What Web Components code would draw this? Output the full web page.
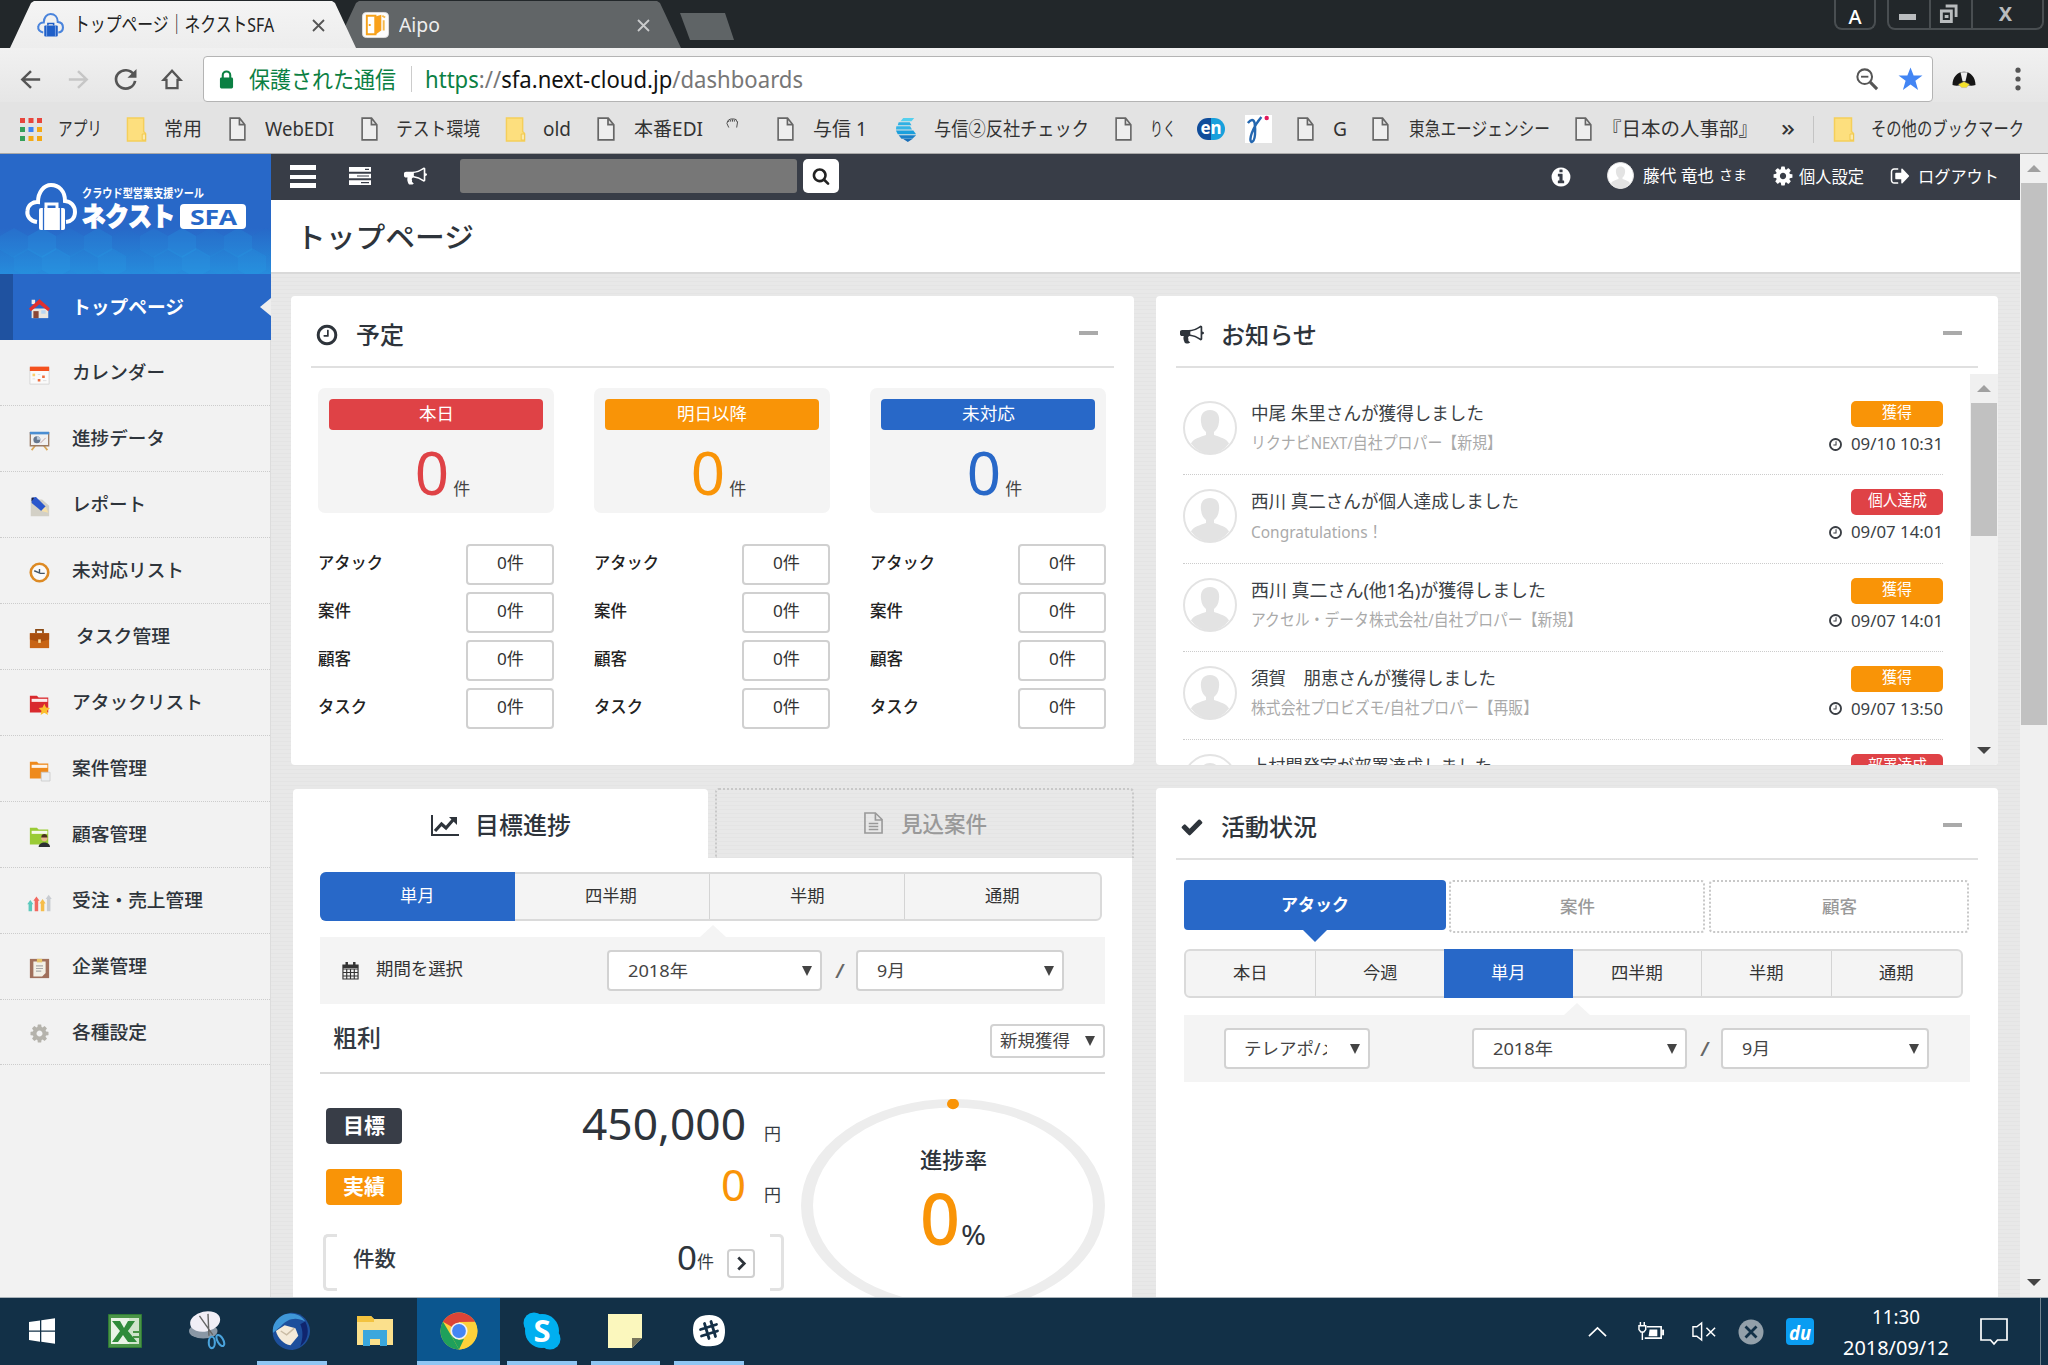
<!DOCTYPE html>
<html lang="ja">
<head>
<meta charset="utf-8">
<title>トップページ｜ネクストSFA</title>
<style>
html,body{margin:0;padding:0;width:2048px;height:1365px;overflow:hidden;background:#fff}
body{font-family:"Noto Sans","Noto Sans CJK JP",sans-serif;color:#333a42}
</style>
</head>
<body>
<sfa-desktop></sfa-desktop>
<script>
const FA={
clock:'M1024 544v448q0 14-9 23t-23 9h-320q-14 0-23-9t-9-23v-64q0-14 9-23t23-9h224v-352q0-14 9-23t23-9h64q14 0 23 9t9 23zm416 352q0-148-73-273t-198-198-273-73-273 73-198 198-73 273 73 273 198 198 273 73 273-73 198-198 73-273zm224 0q0 209-103 385.5t-279.5 279.5-385.5 103-385.5-103-279.5-279.5-103-385.5 103-385.5 279.5-279.5 385.5-103 385.5 103 279.5 279.5 103 385.5z',
cog:'M1152 896q0-106-75-181t-181-75-181 75-75 181 75 181 181 75 181-75 75-181zm512-109v222q0 12-8 23t-20 13l-185 28q-19 54-39 91 35 50 107 138 10 12 10 25t-9 23q-27 37-99 108t-94 71q-12 0-26-9l-138-108q-44 23-91 38-16 136-29 186-7 28-36 28h-222q-14 0-24.5-8.5t-11.5-21.5l-28-184q-49-16-90-37l-141 107q-10 9-25 9-14 0-25-11-126-114-165-168-7-10-7-23 0-12 8-23 15-21 51-66.5t54-70.5q-27-50-41-99l-183-27q-13-2-21-12.5t-8-23.5v-222q0-12 8-23t19-13l186-28q14-46 39-92-40-57-107-138-10-12-10-24 0-10 9-23 26-36 98.5-107.5t94.5-71.5q13 0 26 10l138 107q44-23 91-38 16-136 29-186 7-28 36-28h222q14 0 24.500 8.500t11.500 21.500l28 184q49 16 90 37l142-107q9-9 24-9 13 0 25 10 129 119 165 170 7 8 7 22 0 12-8 23-15 21-51 66.5t-54 70.5q26 50 41 98l183 28q13 2 21 12.5t8 23.5z',
bullhorn:'M1664 640q53 0 90.5 37.5t37.5 90.5-37.5 90.5-90.5 37.5v384q0 52-38 90t-90 38q-417-347-812-380-58 19-91 66t-31 100.5 40 92.5q-20 33-23 65.5t6 58 33.5 55 48 50 61.5 50.5q-29 58-111.5 83t-168.5 11.5-132-55.5q-7-23-29.5-87.5t-32-94.5-23-89-15-101 3.5-98.5 22-110.5h-122q-66 0-113-47t-47-113v-192q0-66 47-113t113-47h480q435 0 896-384 52 0 90 38t38 90v384zm-128 604v-954q-394 302-768 343v270q377 42 768 341z',
info:'M1152 1376v-160q0-14-9-23t-23-9h-96v-512q0-14-9-23t-23-9h-320q-14 0-23 9t-9 23v160q0 14 9 23t23 9h96v320h-96q-14 0-23 9t-9 23v160q0 14 9 23t23 9h448q14 0 23-9t9-23zm-128-896v-160q0-14-9-23t-23-9h-192q-14 0-23 9t-9 23v160q0 14 9 23t23 9h192q14 0 23-9t9-23zm640 416q0 209-103 385.5t-279.5 279.5-385.5 103-385.5-103-279.5-279.5-103-385.5 103-385.5 279.5-279.5 385.5-103 385.5 103 279.5 279.5 103 385.5z',
signout:'M704 1440q0 4 1 20t.5 26.5-3 23.5-10 19.5-20.5 6.5h-320q-119 0-203.5-84.5t-84.5-203.5v-704q0-119 84.5-203.5t203.5-84.5h320q13 0 22.5 9.5t9.5 22.5q0 4 1 20t.5 26.5-3 23.5-10 19.5-20.5 6.5h-320q-66 0-113 47t-47 113v704q0 66 47 113t113 47h312l11.5 1 11.5 3 8 5.5 7 9 2 13.5zm928-544q0 26-19 45l-544 544q-19 19-45 19t-45-19-19-45v-288h-448q-26 0-45-19t-19-45v-384q0-26 19-45t45-19h448v-288q0-26 19-45t45-19 45 19l544 544q19 19 19 45z',
check:'M1671 566q0 40-28 68l-724 724-136 136q-28 28-68 28t-68-28l-136-136-362-362q-28-28-28-68t28-68l136-136q28-28 68-28t68 28l294 295 656-657q28-28 68-28t68 28l136 136q28 28 28 68z',
search:'M1216 832q0-185-131.5-316.5t-316.5-131.5-316.5 131.5-131.5 316.5 131.5 316.5 316.5 131.5 316.5-131.5 131.5-316.5zm512 832q0 52-38 90t-90 38q-54 0-90-38l-343-342q-179 124-399 124-143 0-273.5-55.5t-225-150-150-225-55.5-273.5 55.5-273.5 150-225 225-150 273.5-55.5 273.5 55.5 225 150 150 225 55.5 273.5q0 220-124 399l343 343q37 37 37 90z'
};
const fa=n=>['0 0 1792 1792',`<path fill="currentColor" d="${FA[n]}"/>`];
const folder=(c,x)=>['0 0 24 24',`<path d="M1 2h8l2 2h11v17H1z" fill="${c}"/><path d="M3 5.500h18v3.500H3z" fill="#fff" opacity=".9"/>${x}`];
const cloud=(bag,line,stripe)=>['0 0 52 48',`<path d="M12 39C5 38 1.500 33 2.500 27.500 3 22 8 18.500 13 19 13 9 19 2 26 2c8 0 14 6 14 16 6 .5 10 5 10 11 0 6-4 9.500-9 10" fill="none" stroke="${line}" stroke-width="4"/><rect x="14" y="25" width="26" height="22" rx="2" fill="${bag}"/><path d="M21 25v-4h11v4" fill="none" stroke="${bag}" stroke-width="3"/><path d="M18.500 25v22M35.500 25v22" stroke="${stripe}" stroke-width="1.300"/>`];
const ICONS={
clock:fa('clock'),cog:fa('cog'),bullhorn:fa('bullhorn'),info:fa('info'),signout:fa('signout'),check:fa('check'),search:fa('search'),
logo:cloud('#fff','#fff','#2868c8'),favicon:cloud('#1f5fc8','#4a84dc','#9fc0f2'),
aipo:['0 0 28 28','<rect x=".5" y=".5" width="27" height="27" rx="4" fill="#fdfdfd" stroke="#ddd"/><path d="M5 4h9v20H5z" fill="#fff" stroke="#f5a21c" stroke-width="2"/><path d="M13 5l7-2v17l-7 5z" fill="#f9a11b"/><path d="M7 14h2" stroke="#f5a21c" stroke-width="2"/><path d="M21 4l3 2M22.500 20V9" stroke="#f5b94c" stroke-width="2"/>'],
back:['0 0 24 24','<path d="M22 12H3M12 2.500L2.500 12l9.500 9.500" fill="none" stroke="currentColor" stroke-width="2.700"/>'],
fwd:['0 0 24 24','<path d="M2 12h19M12 2.500l9.500 9.500-9.500 9.500" fill="none" stroke="currentColor" stroke-width="2.700"/>'],
reload:['0 0 24 24','<path d="M20.500 7A10 10 0 1 0 22 14" fill="none" stroke="currentColor" stroke-width="2.800"/><path d="M23.500 1v9.500H14z" fill="currentColor"/>'],
home:['0 0 24 24','<path d="M12 3L2.800 13H6v9h12v-9h3.200z" fill="none" stroke="currentColor" stroke-width="2.500"/>'],
lock:['0 0 16 20','<rect x="1" y="8" width="14" height="11.500" rx="1.500" fill="#0b8043"/><path d="M4 9V5.500a4 4 0 0 1 8 0V9" fill="none" stroke="#0b8043" stroke-width="2.200"/>'],
zoomout:['0 0 24 24','<circle cx="9.500" cy="9.500" r="8" fill="none" stroke="currentColor" stroke-width="2.200"/><path d="M5.500 9.500h8" stroke="currentColor" stroke-width="2"/><path d="M15.500 15.500L23 23" stroke="currentColor" stroke-width="3.400"/>'],
star:['0 0 24 24','<path d="M12 .5l3 8h8.500l-6.800 5.300 2.600 9.200L12 17.600 4.700 23l2.600-9.200L.5 8.500H9z" fill="#4285f4"/>'],
penguin:['0 0 24 20','<path d="M12 1C5 1 .5 8 .5 16.500c4 1.500 8 .5 11.500-1 3.500 1.500 7.500 2.500 11.500 1C23.500 8 19 1 12 1z" fill="#161616"/><path d="M8.500 1.500h7L13.500 12h-3z" fill="#eee"/><path d="M6.500 15.500l5.500-3 5.500 3-3 4H9.500z" fill="#f3e02a" stroke="#a98" stroke-width=".4"/>'],
dots:['0 0 6 24','<g fill="#555"><circle cx="3" cy="3.200" r="2.600"/><circle cx="3" cy="12" r="2.600"/><circle cx="3" cy="20.800" r="2.600"/></g>'],
apps:['0 0 22 23','<g><path fill="#e8453c" d="M0 0h5v5H0zM8.500 0h5v5h-5zM17 0h5v5h-5z"/><path fill="#34a05a" d="M0 9h5v5H0zM0 18h5v5H0z"/><path fill="#3f84f3" d="M8.500 9h5v5h-5z"/><path fill="#f4a915" d="M17 9h5v5h-5zM8.500 18h5v5h-5zM17 18h5v5h-5z"/></g>'],
bfold:['0 0 22 25','<path d="M1.500 1h17v13.500l2 2V24h-19z" fill="#fddf7e" stroke="#f5cf5a" stroke-width="1.500"/><path d="M17 17h3.500v6H17z" fill="#fbe9ac" stroke="#f0c84e"/>'],
doc:['0 0 18 25','<path d="M1.200 1.200h10L16.800 8v15.800H1.200zM11 1.200V8h5.800" fill="#eee" stroke="#666" stroke-width="1.700"/>'],
hand:['0 0 14 11','<path d="M3 10.500L1 6l1-3 1 1V2l2-.8L7 1l2 .2 2 .6.3 1.800L12.500 4l-1 6.500M5 4V2M7 4V1.500M9 4V2" fill="none" stroke="#444" stroke-width="1"/>'],
globe:['0 0 24 26','<path d="M9 1h12l-3 3.500H6z" fill="#55d0ee"/><path d="M4 5.500h12l2 3H3z" fill="#2fb0e4"/><path d="M1.500 9.500h15l2 3.500H1z" fill="#35b4e6"/><path d="M1 14h19l3 4H3z" fill="#1b9fdc"/><path d="M4 19h19l-4 3.500H7z" fill="#1a80c8"/><path d="M9 23h10l-5 3z" fill="#1a6fb8"/>'],
gamma:['0 0 28 28','<path d="M0 0h28v28H0z" fill="#fff"/><path d="M3 8c3-4 6-4 7 0 1 7 1 18-3 19-4-1 1-15 10-25" fill="none" stroke="#2467b0" stroke-width="2.500"/><circle cx="22.500" cy="3" r="2.300" fill="#e2185b"/>'],
tasks:['0 0 22 19','<path fill="currentColor" d="M0 0h22v5H0zM0 7h22v5H0zM0 14h22v5H0z"/><path d="M16 2.500h4M8 9.500h12M12 16.500h8" stroke="#383d47" stroke-width="1.300"/>'],
chart:['0 0 28 21','<path d="M1 0v20h27" fill="none" stroke="currentColor" stroke-width="2"/><path d="M4 16l6.500-7 4.500 4 7-8" fill="none" stroke="currentColor" stroke-width="3.200"/><path d="M18 2h8v8z" fill="currentColor"/>'],
filetext:['0 0 20 22','<path d="M1 1h11l7 6.500V21H1zM12 1v7h7M5 11.500h10M5 14.500h10M5 17.500h10" fill="none" stroke="currentColor" stroke-width="1.700"/>'],
calendar:['0 0 18 19','<path d="M1 4h16v14H1zM1 8h16M1 11.500h16M1 15h16M5 8v10M9 8v10M13 8v10" fill="none" stroke="currentColor" stroke-width="1.200"/><path d="M1 4h16v3H1z" fill="currentColor"/><path d="M5 1v4M13 1v4" stroke="currentColor" stroke-width="2.600"/>'],
right:['0 0 12 16','<path d="M2.500 1.500L9 8l-6.500 6.500" fill="none" stroke="#2e343b" stroke-width="3"/>'],
m0:['0 0 24 24','<path d="M3 2h4v5H3z" fill="#eee"/><path d="M3 12h19v11H3z" fill="#e9e6e0"/><path d="M0 12L12 1l12 11-2 3-10-8-10 8z" fill="#e02f2f"/><path d="M5 15h6v8H5z" fill="#8a4636"/><path d="M14 14h5v4h-5z" fill="#b9d6f2"/>'],
m1:['0 0 24 24','<path d="M1 4h22v19H1z" fill="#fafafa" stroke="#d5d5d5"/><path d="M1 3h22v5H1z" fill="#f4511e"/><path d="M4 11h3v3H4z" fill="#f9cf6a"/><path d="M15 13h3v3h-3zM10 17h3v3h-3z" fill="#ef6a3a"/><path d="M4 17h3M10 12h3M16 19h4" stroke="#ddd"/>'],
m2:['0 0 24 24','<path d="M7 18l-4 5M17 18l4 5" stroke="#d9a85a" stroke-width="2"/><path d="M1.500 3h21v15h-21z" fill="#f1f1f1" stroke="#9a7a62" stroke-width="1.500"/><path d="M1 2h22v3H1z" fill="#4b8ed2"/><circle cx="9" cy="11" r="4" fill="#66788f"/><path d="M13 15l6-6" stroke="#b99"/><path d="M9 11V7a4 4 0 0 1 4 4z" fill="#b8c8dc"/>'],
m3:['0 0 24 24','<path d="M2 4h13l8 7v12H2z" fill="#d3d0c6"/><path d="M3 2l5-1 11 11-5 5L3 8z" fill="#2b57cc"/><path d="M19 12l3 7-8-2z" fill="#f5dfaa"/><path d="M3 2l3 0-3 4z" fill="#223"/>'],
m4:['0 0 24 24','<circle cx="12" cy="12" r="10" fill="#fafafa" stroke="#dd8a24" stroke-width="3"/><path d="M6 10l7 3h5M12 8v5" fill="none" stroke="#456" stroke-width="1.600"/>'],
m5:['0 0 24 24','<path d="M8 6V2h8v4" fill="none" stroke="#8a4a16" stroke-width="2"/><path d="M1 6h22v17H1z" fill="#c86414"/><path d="M1 6h22v7l-11 3-11-3z" fill="#a94f10"/><path d="M10.500 13h3v4h-3z" fill="#ffe2a0"/>'],
m6:folder('#d92a2e','<path d="M17.500 11l2 4.500 4.500.5-3.300 3 1 5-4.200-2.500-4.200 2.500 1-5-3.300-3 4.500-.5z" fill="#fbc02d"/>'),
m7:folder('#ee8a1c','<path d="M14 14h10v10H14z" fill="#eceff1" stroke="#ccc"/>'),
m8:folder('#9acb36','<circle cx="17.500" cy="14" r="3.500" fill="#e9b78f"/><path d="M14 13c0-5 7-5 7 0z" fill="#4a3020"/><path d="M11 24c0-7 13-7 13 0z" fill="#2b2f33"/>'),
m9:['0 0 24 24','<g stroke-width="4"><path d="M1.500 22V13" stroke="#5cc9bd"/><path d="M8.500 22V9" stroke="#f2685f"/><path d="M15.500 22V12" stroke="#f6bd4a"/><path d="M22.500 22V7" stroke="#c8ccd2"/></g><path d="M-2 14l3.500-5L5 14z" fill="#5cc9bd"/><path d="M5 10L8.500 5l3.500 5z" fill="#f2685f"/><path d="M12 13l3.500-5 3.500 5z" fill="#f6bd4a"/><path d="M19 8l3.500-5L26 8z" fill="#c8ccd2"/>'],
m10:['0 0 24 24','<path d="M1 1h22v22H1z" fill="#a0705c"/><path d="M5 4h14v13l-4 4H5z" fill="#f3f0e6"/><path d="M9 1h6v4H9z" fill="#e7c46a"/><path d="M8 9h8M8 12h8M8 15h6" stroke="#aaa" stroke-width="1.300"/>'],
m11:['0 0 1792 1792',`<path fill="#b5b3ac" d="${FA.cog}"/>`],
win:['0 0 26 26','<path fill="#fff" d="M0 4l11-1.500V12.500H0zM12.300 2.300L26 .3v12.200H12.300zM0 13.700h11v10L0 22zM12.300 13.700H26v12l-13.700-2z"/>'],
excel:['0 0 34 34','<path d="M.5.500h33v33H.5z" fill="#4a9447" stroke="#2f7a35"/><path d="M3 4h28v26H3z" fill="#e9f3e6"/><path d="M21 4h10v26H21z" fill="#d0e4cc"/><path d="M4 7h8l4 7 4-7h7l-7 10 9 11h-9l-5-7-5 7H4l8-11z" fill="#2f8b3a"/><path d="M25 18h6M25 23h6" stroke="#4a9447" stroke-width="2"/>'],
snip:['0 0 40 40','<ellipse cx="15" cy="20" rx="15" ry="8" fill="#8a97a5"/><ellipse cx="17" cy="10" rx="16" ry="10.500" fill="#f1eef6" transform="rotate(-12 17 10)"/><path d="M11 4l14 20M20 2l1 23" stroke="#666" stroke-width="1.500"/><ellipse cx="24" cy="32" rx="3.200" ry="6" fill="none" stroke="#4aa3dc" stroke-width="2.200"/><ellipse cx="33" cy="30" rx="3" ry="6.500" fill="none" stroke="#4aa3dc" stroke-width="2.200" transform="rotate(-30 33 30)"/>'],
bird:['0 0 40 40','<path d="M18 1C6 4-1 14 1 25c2 9 10 15 20 15 10-1 18-10 18-20C39 9 29-1 18 1z" fill="#1d4f9c"/><path d="M10 4c8-5 20-2 24 6-10-6-19-2-24 4-4 4-9 8-9 8C0 14 4 8 10 4z" fill="#3f97d8"/><path d="M4 20l9-6 11 3 3 8-8 10C12 34 6 28 4 20z" fill="#f4ead9"/><path d="M9 20l6 4 8-7" fill="none" stroke="#c9bba5" stroke-width="1.500"/><path d="M34 10c5 9 3 20-5 26 3-9 3-16 0-23z" fill="#10256e"/>'],
explorer:['0 0 36 31','<path d="M0 1h14l3 3h19v26H0z" fill="#fbe08c"/><path d="M0 1h14l3 3v3H0z" fill="#f3c33f"/><path d="M6 31V15h24v16h-7v-7H13v7z" fill="#3ba7dd"/>'],
chrome:['0 0 38 38','<circle cx="19" cy="19" r="18.500" fill="#fdd13a"/><path d="M19 19L2.980 9.750A18.500 18.500 0 0 1 35.020 9.750L19 10z" fill="#dc4437"/><path d="M2.980 9.750h0l8.200 13.800L19 37.500A18.500 18.500 0 0 1 2.980 9.750z" fill="#1fa05b"/><path d="M35 10H19v9l8 5-8 13.500A18.500 18.500 0 0 0 35 10z" fill="#fdd13a"/><path d="M11 23l8 5 5-1-5 10.500z" fill="#1fa05b"/><circle cx="19" cy="19" r="8.600" fill="#f2f2f2"/><circle cx="19" cy="19" r="6.900" fill="#4585f3"/>'],
skype:['0 0 38 38','<circle cx="11" cy="11" r="10.500" fill="#00aff0"/><circle cx="27" cy="27" r="10.500" fill="#00aff0"/><circle cx="19" cy="19" r="17" fill="#00aff0"/>'],
sticky:['0 0 34 34','<path d="M0 0h34v24L24 34H0z" fill="#fbf7bd"/><path d="M24 34V24h10z" fill="#77755c"/>'],
slack:['0 0 32 32','<path d="M9 1C16-1 24 0 28 4c5 5 5 16 2 22-3 5-13 6-19 5C4 30 0 24 0 15 0 7 3 3 9 1z" fill="#fff"/><g stroke="#153047" stroke-width="2.800" stroke-linecap="round"><path d="M11.500 8.500l4.500 15M18 6.500l4.500 15M7.500 14.500l16-5M8.500 21l16-5"/></g>'],
up:['0 0 20 12','<path d="M1 11l9-9 9 9" fill="none" stroke="#fff" stroke-width="1.700"/>'],
batt:['0 0 28 20','<path d="M9 5h15v12H7" fill="none" stroke="#fff" stroke-width="1.700"/><path d="M12 8h8v7h-9z" fill="#fff"/><path d="M25 8h2v6h-2z" fill="#fff"/><path d="M2.500 0v4M6.500 0v4M1 4h7v4l-2 2.500H3L1 8zM4.500 10v9" fill="none" stroke="#fff" stroke-width="1.500"/>'],
mute:['0 0 26 20','<path d="M1 5h4l5-4v18l-5-4H1z" fill="none" stroke="#fff" stroke-width="1.500"/><path d="M15 6l9 9M24 6l-9 9" stroke="#fff" stroke-width="1.600"/>'],
xcirc:['0 0 26 26','<circle cx="13" cy="13" r="12.500" fill="#93a0aa"/><path d="M7.500 7.500l11 11M18.500 7.500l-11 11" stroke="#123047" stroke-width="2.800"/>'],
note:['0 0 28 28','<path d="M1 1h26v21h-9.500L14 26l-3.500-4H1z" fill="none" stroke="#fff" stroke-width="1.700"/>'],
avatar:['0 0 54 54','<circle cx="27" cy="27" r="26" fill="#fff" stroke="#e3e3e3" stroke-width="2"/><path d="M27 9c7 0 10 5 9 12-.5 5-2.500 8-5 10v3c6 2 13 4 15 8.500A26 26 0 0 1 27 53 26 26 0 0 1 8 42.500C10 38 17 36 23 34v-3c-2.500-2-4.500-5-5-10-1-7 2-12 9-12z" fill="#e3e3e3"/>'],
restore:['0 0 20 20','<path d="M7 2h11v11" fill="none" stroke="#b9bcbe" stroke-width="3"/><path d="M2.500 7h10.500v10.500H2.500z" fill="none" stroke="#b9bcbe" stroke-width="3"/><path d="M6 11h4v3H6z" fill="#b9bcbe"/>']
};
const BASE=`*{box-sizing:border-box}:host{box-sizing:border-box}.row{display:flex;align-items:center}.sp{flex:1}`;
const def=(name,render)=>customElements.define(name,class extends HTMLElement{
  constructor(){super();this.attachShadow({mode:'open'})}
  connectedCallback(){const [css,html]=render(this);this.shadowRoot.innerHTML=`<style>${BASE}${css}</style>${html}`}
});
const at=(el,n,d='')=>el.getAttribute(n)??d;

/* Text set to a given advance width, condensed or widened as needed */
customElements.define('fit-text',class extends HTMLElement{
  constructor(){super();this.attachShadow({mode:'open'}).innerHTML='<style>:host{display:block;flex:none;white-space:pre;line-height:1.3}span{display:inline-block;transform-origin:0 50%}</style><span><slot></slot></span>'}
  connectedCallback(){const w=+this.getAttribute('w'),s=this.shadowRoot.querySelector('span');this.style.width=w+'px';
    const n=s.getBoundingClientRect().width;if(n)s.style.transform=`scaleX(${w/n})`}
});
def('svg-icon',el=>{const [vb,b]=ICONS[at(el,'n')];const w=at(el,'w','24'),h=at(el,'h',w);
  return [`:host{display:block;flex:none;width:${w}px;height:${h}px}svg{display:block;overflow:visible}`,`<svg width="${w}" height="${h}" viewBox="${vb}" preserveAspectRatio="none">${b}</svg>`]});
const ic=(n,w,h=w,ml=0,st='')=>`<svg-icon n="${n}" w="${w}" h="${h}" style="margin-left:${ml}px;${st}"></svg-icon>`;
const tx=(t,w,ml=0,st='')=>`<fit-text w="${w}" style="margin-left:${ml}px;${st}">${t}</fit-text>`;

/* ---------- browser chrome ---------- */
def('browser-tab',el=>[`:host{display:flex;align-items:center;width:346px;height:47px;padding:1px 0 0 27px;flex:none;font-size:20px;clip-path:polygon(0 100%,21px 2px,24px 0,322px 0,325px 2px,100% 100%);background:${at(el,'bg')};color:${at(el,'fg')}}.x{margin-right:31px}`,
 `<slot></slot><div class="sp"></div><svg class="x" width="13" height="13" viewBox="0 0 13 13"><path d="M1 1l11 11M12 1L1 12" stroke="currentColor" stroke-width="1.800" opacity=".75"/></svg>`]);
def('tab-strip',()=>[`:host{display:flex;height:48px;background:#22272a;padding:1px 0 0 10px;position:relative}
 .second{margin-left:-21px;z-index:0}.first{z-index:1}.new{width:54px;height:27px;margin:12px 0 0 -1px;background:#5f6466;clip-path:polygon(0 0,45px 0,100% 100%,10px 100%)}
 .a,.w{height:30px;margin-top:-1px;border:2px solid #494e51;border-top:0;border-radius:0 0 8px 8px;color:#fff}
 .a{width:42px;font:20px/33px "Noto Sans";text-align:center;font-weight:500;margin-right:11px}
 .w{display:flex;width:157px;margin-right:4px}.w>div{display:flex;align-items:center;justify-content:center;border-right:2px solid #494e51;width:42px}.w>div:last-child{border:0;flex:1;font:bold 20px/28px "Noto Sans";color:#b9bcbe;padding-right:4px}
 i{width:17px;height:6px;background:#b9bcbe;margin:6px 4px 0 0}`,
 `<browser-tab class="first" bg="linear-gradient(#f4f4f4,#ededed)" fg="#222">${ic('favicon',27,24)}${tx('トップページ｜ネクストSFA',200,10)}</browser-tab>
 <browser-tab class="second" bg="#616567" fg="#eee">${ic('aipo',27,26,0)}${tx('Aipo',41,10)}</browser-tab><div class="new"></div><div class="sp"></div>
 <div class="a">A</div><div class="w"><div><i></i></div><div>${ic('restore',19,20,0,'margin-right:5px')}</div><div>X</div></div>`]);
def('address-bar',()=>[`:host{display:flex;align-items:center;height:54px;padding:8px 0 0 20px;color:#555;background:linear-gradient(#f1f1f1,#e6e6e6)}
 .u{display:flex;align-items:center;width:1730px;height:46px;margin-left:20px;border:1px solid #b4b4b4;border-radius:4px;background:#fff;font-size:23px;padding-left:15px}
 .g{color:#0b8043}.k{color:#111}.l{width:1px;height:26px;background:#ccc;margin:0 13px 0 15px}fit-text{padding-top:1px}`,
 `${ic('back',22,21)}${ic('fwd',22,21,25,'color:#c6c6c6')}${ic('reload',23,22,25)}${ic('home',22,22,24)}
 <div class="u">${ic('lock',15,19)}${tx('保護された通信',147,15,'color:#0b8043')}<div class="l"></div>${tx('<span class="g">https</span>://<span class="k">sfa.next-cloud.jp</span>/dashboards',378,0,'color:#777')}<div class="sp"></div>${ic('zoomout',22,22)}${ic('star',25,24,20,'margin-right:9px')}</div>
 ${ic('penguin',24,17,19)}${ic('dots',6,24,39)}`]);
def('bookmark-bar',()=>[`:host{display:flex;align-items:center;height:52px;padding:3px 0 0 20px;font-size:19px;color:#333;background:#e3e3e3;border-bottom:1px solid #a9a9a9}
 .en{width:28px;height:22px;border-radius:11px;margin-left:21px;background:linear-gradient(90deg,#104c9a 50%,#18a0dc 50%);color:#fff;font:bold 17px/19px "Noto Sans";text-align:center}.l{width:1px;height:27px;background:#c4c4c4;margin-left:18px}`,
 `${ic('apps',22,23)}${tx('アプリ',44,16)}${ic('bfold',21,25,24)}${tx('常用',38,17)}${ic('doc',17,24,27)}${tx('WebEDI',69,19)}${ic('doc',17,24,27)}${tx('テスト環境',84,18)}${ic('bfold',21,25,25)}${tx('old',28,17)}${ic('doc',18,24,26)}${tx('本番EDI',69,19)}${ic('hand',13,10,23,'margin-top:-12px')}${ic('doc',17,24,38)}${tx('与信 1',54,19)}${ic('globe',22,25,28)}${tx('与信②反社チェック',155,17)}${ic('doc',17,24,26)}${tx('りく',26,18)}<div class="en">en</div>${ic('gamma',27,28,20)}${ic('doc',17,24,25)}${tx('G',14,19)}${ic('doc',17,24,25)}${tx('東急エージェンシー',141,20)}${ic('doc',17,24,25)}${tx('『日本の人事部』',156,10)}${tx('»',14,23,'font-size:24px;margin-top:-5px')}<div class="l"></div>${ic('bfold',22,25,19)}${tx('その他のブックマーク',153,16)}`]);

/* ---------- sidebar ---------- */
def('side-logo',()=>[`:host{display:flex;align-items:center;height:120px;padding:0 0 14px 25px;color:#fff;position:relative;background:linear-gradient(#2868c8 0 62%,#278cdc 100%)}
 .hex{position:absolute;left:0;bottom:0;z-index:0}.r{z-index:1;display:flex;flex-direction:column;margin:3px 0 0 5px;gap:1px}.b{display:flex;align-items:center;height:29px;gap:5px}.s{background:#fff;color:#2868c8;width:66px;height:25px;border-radius:4px;display:flex;align-items:center;justify-content:center;font-weight:bold;font-size:22px}`,
 `<svg class="hex" width="271" height="46">${Array.from({length:22},(_,i)=>{const x=(i%11)*28+(i>10?14:0),y=i>10?14:34;return `<path d="M${x} ${y-14}l14 8v14l-14 8-14-8v-14z" fill="#25a5e8" opacity="${(i*7%5)*.05+.03}"/>`}).join('')}</svg>${ic('logo',52,48,0,'z-index:1')}<div class="r">${tx('クラウド型営業支援ツール',122,0,'font-size:12px;font-weight:bold;line-height:14px')}<div class="b">${tx('ネクスト',93,0,'font-size:26px;font-weight:900;-webkit-text-stroke:1.200px #fff;line-height:29px')}<div class="s">${tx('SFA',47,0,'line-height:25px')}</div></div></div>`]);
def('side-item',el=>{const on=el.hasAttribute('on');return [`:host{display:flex;align-items:center;height:${at(el,'i')==='11'?65:66}px;padding-left:${on?16:29}px;font-size:18.7px;font-weight:500;position:relative;color:${on?'#fff':'#2e343b'};${on?'background:#2868c8;border-left:13px solid #1f52a0;font-weight:bold':'border-bottom:1px dotted #ccc'}}
 .t{position:absolute;right:0;top:24px;border:9px solid transparent;border-right:11px solid #eee;border-left:0}`,
 `${ic('m'+at(el,'i'),21,21,0,'margin-top:3px')}${tx(at(el,'label'),+at(el,'w'),+at(el,'g','22'))}${on?'<div class="t"></div>':''}`]});
const MENU=[['トップページ',112],['カレンダー',93],['進捗データ',93],['レポート',74],['未対応リスト',112],['タスク管理',94,26],['アタックリスト',131],['案件管理',75],['顧客管理',75],['受注・売上管理',131],['企業管理',75],['各種設定',75]];
def('side-bar',()=>[`:host{display:block;width:271px;flex:none;background:#f2f2f2;border-right:1px solid #dcdcdc}`,
 `<side-logo style="margin-right:-1px"></side-logo>${MENU.map(([l,w,g=22],i)=>`<side-item label="${l}" w="${w}" g="${g}" i="${i}" ${i?'':'on style="margin-right:-1px"'}></side-item>`).join('')}`]);

/* ---------- main ---------- */
def('top-nav',()=>[`:host{display:flex;flex:none;align-items:center;height:46px;padding:0 21px 3px 19px;background:#383d47;color:#fff;font-size:16.500px}
 .h{width:26px;height:23px;border:solid #fff;border-width:5px 0;display:flex;align-items:center}.h:before{content:"";width:100%;height:4px;background:#fff}
 .q{width:337px;height:34px;border-radius:3px;background:#777;margin:1px 0 0 33px}.b{width:36px;height:34px;border-radius:5px;background:#fff;color:#222;margin:1px 0 0 6px;display:flex;align-items:center;justify-content:center}`,
 `<div class="h" style="margin-top:2px"></div>${ic('tasks',22,18,33)}${ic('bullhorn',23,20,33)}<div class="q"></div><div class="b">${ic('search',18,18)}</div><div class="sp"></div>
 ${ic('info',22,22,0,'margin-top:2px')}${ic('avatar',27,27,35)}${tx('藤代 竜也',71,9)}${tx('さま',28,5,'font-size:14px')}${ic('cog',22,22,25)}${tx('個人設定',65,5,'margin-top:2px')}${ic('signout',21,22,26)}${tx('ログアウト',81,7,'margin-top:2px')}`]);
def('panel-head',el=>[`:host{display:flex;align-items:center;height:72px;margin:0 20px;padding:7px 16px 0 4px;border-bottom:2px solid #e0e0e0;font-size:24px;font-weight:500;color:#2e343b}i{width:19px;height:4px;background:#aaa;margin-top:-3px}`,
 `${ic(at(el,'icon'),24,+at(el,'h','24'))}${tx(at(el,'label'),+at(el,'w'),17)}<div class="sp"></div><i></i>`]);
def('sched-col',el=>[`:host{display:block;width:236px}.c{height:125px;background:#f4f4f4;border-radius:7px;padding:11px 11px 0;display:flex;flex-direction:column}
 .l{height:31px;flex:none;border-radius:4px;background:${at(el,'c')};color:#fff;display:flex;justify-content:center;align-items:center;font-size:17px}
 .n{display:flex;justify-content:center;align-items:baseline;gap:4px;line-height:74px;margin-top:5px;padding-left:13px}.n b{font-size:60px;font-weight:400;color:${at(el,'c')}}.n span{font-size:17px;color:#444}
 .rows{display:flex;flex-direction:column;gap:7px;margin-top:31px}.r{display:flex;justify-content:space-between;align-items:center;font-size:16.500px;font-weight:500;color:#222;height:41px}
 .r>div{width:88px;height:41px;border:2px solid #d0d0d0;border-radius:4px;font-weight:400;display:flex;justify-content:center;align-items:center;font-size:16.500px;color:#333}`,
 `<div class="c"><div class="l">${tx(at(el,'label'),+at(el,'w'),0,'margin-top:-1px')}</div><div class="n"><b>0</b><span>件</span></div></div>
 <div class="rows">${[['アタック',65],['案件',33],['顧客',33],['タスク',49]].map(([t,w])=>`<div class="r">${tx(t,w,0,'margin-top:-4px')}<div>${tx('0件',27,0,'margin-top:-4px')}</div></div>`).join('')}</div>`]);
def('schedule-panel',()=>[`:host{display:block;background:#fff;border-radius:4px;height:469px}.g{display:flex;justify-content:space-between;padding:20px 28px 0 27px}`,
 `<panel-head icon="clock" label="予定" w="48"></panel-head><div class="g"><sched-col c="#df4246" label="本日" w="35"></sched-col><sched-col c="#f99407" label="明日以降" w="70"></sched-col><sched-col c="#2868c8" label="未対応" w="53"></sched-col></div>`]);
def('news-item',el=>{const a=n=>at(el,n);return [`:host{display:flex;height:88.300px;padding-top:14px;border-bottom:1px dotted #ccc;color:#3b3f45;flex:none}
 .m{display:flex;flex-direction:column;margin-left:14px;flex:1;font-size:18px}.s{color:#aaa;font-size:16.500px;margin-top:7px}.e{display:flex;flex-direction:column;align-items:flex-end}
 .b{width:92px;height:26px;flex:none;border-radius:5px;background:${a('c')};color:#fff;display:flex;align-items:center;justify-content:center;font-size:15.500px}.d{display:flex;align-items:center;font-size:17px;margin-top:6px;gap:8px}`,
 `${ic('avatar',54,54)}<div class="m">${tx(a('t'),+a('tw'),0,'margin-top:1px')}${a('s')?`<div class="s">${tx(a('s'),+a('sw'))}</div>`:''}</div><div class="e"><div class="b">${tx(a('b'),a('b').length>2?59:30,0,'margin-top:-4px')}</div>${a('d')?`<div class="d">${ic('clock',15,15)}${tx(a('d'),92)}</div>`:''}</div>`]});
const O='#f99407',R='#df4246';
const NEWS=[['中尾 朱里さんが獲得しました',233,'リクナビNEXT/自社プロパー【新規】',251,'獲得',O,'09/10 10:31'],['西川 真二さんが個人達成しました',268,'Congratulations！',132,'個人達成',R,'09/07 14:01'],['西川 真二さん(他1名)が獲得しました',295,'アクセル・データ株式会社/自社プロパー【新規】',331,'獲得',O,'09/07 14:01'],['須賀　朋恵さんが獲得しました',245,'株式会社プロビズモ/自社プロパー【再販】',287,'獲得',O,'09/07 13:50'],['上村開発室が部署達成しました',241,'',0,'部署達成',R,'']];
def('scroll-rail',el=>[`:host{display:flex;flex-direction:column;align-items:center;width:28px;background:#f0f0f0;flex:none}
 .u,.d{height:29px;display:flex;align-items:center}.u:before{content:"";border:7px solid transparent;border-bottom-color:#a0a0a0;border-top:0}.d:before{content:"";border:7px solid transparent;border-top-color:#444;border-bottom:0}.t{width:26px;background:#c1c1c1;height:${at(el,'thumb')}px}`,
 `<div class="u"></div><div class="t"></div><div class="sp"></div><div class="d"></div>`]);
def('news-panel',()=>[`:host{display:block;background:#fff;border-radius:4px;height:469px;overflow:hidden}.g{display:flex;height:391px;margin-top:6px}.l{height:391px;overflow:hidden;padding:13px 0 0 27px;width:787px;display:flex;flex-direction:column}.sp{flex:1}`,
 `<panel-head icon="bullhorn" h="21" label="お知らせ" w="96"></panel-head><div class="g"><div class="l">${NEWS.map(([t,tw,s,sw,b,c,d])=>`<news-item t="${t}" tw="${tw}" s="${s}" sw="${sw}" b="${b}" c="${c}" d="${d}"></news-item>`).join('')}</div><div class="sp"></div><scroll-rail thumb="133"></scroll-rail></div>`]);
def('seg-group',el=>{const on=+at(el,'on');return [`:host{display:flex;height:49px;border:2px solid #dadada;border-radius:6px;background:#f4f4f4;font-size:16.500px;color:#333}
 div{flex:1;display:flex;align-items:center;justify-content:center;border-right:1px solid #d4d4d4}div:last-child{border:0}.on{background:#2868c8;color:#fff;margin:-2px -1px -2px -2px;${on?'':'border-radius:6px 0 0 6px;'}border:0}`,
 at(el,'items').split(',').map((t,i)=>`<div class="${i===on?'on':''}">${tx(t,t.length*(+at(el,'cw','17.300')),0,'margin-top:-1px')}</div>`).join('')]});
def('select-box',el=>[`:host{display:flex;align-items:center;width:${at(el,'w')}px;height:${at(el,'h','41')}px;border:2px solid #d2d2d2;border-radius:4px;background:#fff;font-size:17px;color:#444;padding:0 ${at(el,'pr','8')}px 0 ${at(el,'pl','19')}px}i{border:5.500px solid transparent;border-top:10px solid #444;border-bottom:0}.c{overflow:hidden;padding-top:2px}`,
 `<div class="c" style="${el.hasAttribute('clip')?`width:${at(el,'clip')}px`:''}">${tx(at(el,'t'),+at(el,'tw'))}</div><div class="sp"></div><i></i>`]);
def('filter-bar',el=>[`:host{display:flex;align-items:center;height:67px;margin-top:16px;background:#f4f4f4;position:relative;font-size:17px;color:#333}
 .t{position:absolute;left:50%;top:-12px;margin-left:-13px;border:13px solid transparent;border-bottom:12px solid #f4f4f4;border-top:0}`,`<div class="t"></div><slot></slot>`]);
def('goal-panel',()=>[`:host{display:block;width:843px;height:511px}
 .tabs{display:flex;height:70px;font-size:24px;font-weight:500;padding-left:2px;color:#2e343b}.a{width:415px;height:71px;background:#fff;border-radius:4px 4px 0 0;display:flex;justify-content:center;align-items:center;margin-top:1px;padding:1px 0 0 1px}.b{width:419px;margin-left:7px;border:2px dotted #c8c8c8;border-bottom:0;display:flex;justify-content:center;align-items:center;color:#999;border-radius:4px 4px 0 0;padding:0 0 2px 2px}
 .p{background:#fff;height:441px;margin:0 2px;padding:14px 27px 0;position:relative}seg-group{width:782px}
 .h{display:flex;align-items:center;justify-content:space-between;height:70px;border-bottom:2px solid #dadada;padding:5px 0 0 13px}
 .body{display:flex;margin-top:25px}.left{width:465px;padding-top:8px}.v{display:flex;align-items:flex-end;height:37px;margin-left:6px;margin-bottom:24px}
 .v>div:first-child{width:76px;height:36px;border-radius:4px;color:#fff;font-size:21px;font-weight:bold;display:flex;align-items:center;justify-content:center}
 .br{display:flex;align-items:center;width:461px;height:56px;margin:29px 0 0 3px}.l,.r{width:14px;height:57px;border:3px solid #e2e2e2}.l{border-right:0;border-radius:5px 0 0 5px}.r{border-left:0;border-radius:0 5px 5px 0}
 .btn{width:28px;height:29px;border:2px solid #d0d0d0;border-radius:4px;display:flex;align-items:center;justify-content:center;margin:3px 15px 0 13px}
 .ring{width:304px;height:213px;margin-left:16px;position:relative}.ring svg{display:block}.lab{position:absolute;inset:0;display:flex;flex-direction:column;align-items:center;padding-top:46px;color:#2e343b}
 .pc{display:flex;align-items:baseline;line-height:64px;margin-top:12px}`,
 `<div class="tabs"><div class="a">${ic('chart',28,21)}${tx('目標進捗',96,16)}</div><div class="b">${ic('filetext',19,22)}${tx('見込案件',86,18,'font-size:22px')}</div></div>
 <div class="p"><seg-group on="0" items="単月,四半期,半期,通期"></seg-group>
 <filter-bar>${ic('calendar',17,19,22)}${tx('期間を選択',87,17,'margin-top:-3px')}<div class="sp"></div><select-box w="215" t="2018年" tw="60"></select-box>${tx('/',10,13,'margin-right:11px;font-size:20px;color:#666')}<select-box w="208" t="9月" tw="28" style="margin-right:41px"></select-box></filter-bar>
 <div class="h">${tx('粗利',48,0,'font-size:24px;font-weight:500;margin-top:-5px')}<select-box w="115" h="34" t="新規獲得" tw="70" pl="8" pr="8"></select-box></div>
 <div class="body"><div class="left">
 <div class="v"><div style="background:#383d47">${tx('目標',42)}</div><div class="sp"></div>${tx('450,000',164,0,'font-size:43px;line-height:50px;color:#2e343b;margin-bottom:-5px')}${tx('円',17,18,'font-size:17px;margin-right:4px;margin-bottom:-1px')}</div>
 <div class="v"><div style="background:#f99407">${tx('実績',42)}</div><div class="sp"></div>${tx('0',25,0,'font-size:43px;line-height:50px;color:#f99407;margin-bottom:-5px')}${tx('円',17,18,'font-size:17px;margin-right:4px;margin-bottom:-1px')}</div>
 <div class="br"><div class="l"></div>${tx('件数',43,16,'font-size:21px;font-weight:500;margin-top:-6px')}<div class="sp"></div>${tx('0',20,0,'font-size:33px;margin-top:-8px;color:#2e343b')}${tx('件',17,0,'font-size:17px')}<div class="btn">${ic('right',11,15)}</div><div class="r"></div></div></div>
 <div class="ring"><svg width="304" height="213" viewBox="0 0 304 304" preserveAspectRatio="none"><circle cx="152" cy="152" r="146" fill="none" stroke="#ededed" stroke-width="12"/><ellipse cx="152" cy="7" rx="6" ry="7.500" fill="#f99407"/></svg>
 <div class="lab">${tx('進捗率',67,0,'font-size:22px;font-weight:500')}<div class="pc">${tx('0',40,0,'font-size:71px;font-weight:500;color:#f99407;line-height:64px')}${tx('%',25,1,'font-size:28px')}</div></div></div>
 </div></div>`]);
def('activity-panel',()=>[`:host{display:block;background:#fff;border-radius:4px 4px 0 0;height:511px}
 .t{display:flex;height:53px;margin:20px 28px 0;font-size:16.500px;font-weight:500;color:#999}.t>div{display:flex;align-items:center;justify-content:center;border:2px dotted #c8c8c8;border-radius:4px;width:260px}
 .t .a{background:#2868c8;color:#fff;border:0;width:262px;height:50px;position:relative;margin-right:3px;font-weight:bold}.a:after{content:"";position:absolute;left:118px;top:49px;border:13px solid transparent;border-top:13px solid #2868c8;border-bottom:0}
 seg-group{margin:16px 35px 0 28px}filter-bar{margin:17px 28px 0}`,
 `<panel-head icon="check" label="活動状況" w="96"></panel-head><div class="t"><div class="a">${tx('アタック',68)}</div><div style="width:256px;margin-right:4px">${tx('案件',35)}</div><div>${tx('顧客',35)}</div></div>
 <seg-group on="2" items="本日,今週,単月,四半期,半期,通期"></seg-group>
 <filter-bar><select-box w="146" t="テレアポ/メ" tw="94" clip="83" pl="18" style="margin-left:40px"></select-box><div class="sp"></div><select-box w="215" t="2018年" tw="60"></select-box>${tx('/',10,13,'margin-right:11px;font-size:20px;color:#666')}<select-box w="208" t="9月" tw="28" style="margin-right:41px"></select-box></filter-bar>`]);
def('main-area',()=>[`:host{display:flex;flex-direction:column;width:1749px;flex:none;background:repeating-linear-gradient(#e8e8e8 0 3px,#e4e4e4 3px 4px)}
 .ti{height:74px;flex:none;background:#fff;border-bottom:2px solid #d9d9d9;display:flex;align-items:center;padding:3px 0 0 25px;font-size:28px;font-weight:500;color:#2e343b}
 .g{display:grid;flex:none;grid-template-columns:843px 842px;gap:23px 22px;padding:22px 0 0 20px}`,
 `<top-nav></top-nav><div class="ti">${tx('トップページ',178)}</div><div class="g"><schedule-panel></schedule-panel><news-panel></news-panel><goal-panel></goal-panel><activity-panel></activity-panel></div>`]);

/* ---------- taskbar ---------- */
def('task-bar',()=>[`:host{display:flex;align-items:center;height:68px;background:#123047;border-top:1px solid #a9b3ba;color:#fff;flex:none}
 .s{width:83.400px;height:67px;display:flex;align-items:center;justify-content:center;position:relative;flex:none;padding-bottom:2px}.on{background:#0b568f}.u:after{content:"";position:absolute;left:7px;right:7px;bottom:0;height:4px;background:#8fc6f3}.on:after{left:0;right:0}
 .sk{position:absolute;inset:0 0 2px;display:flex;align-items:center;justify-content:center;font:bold 31px/1 "Noto Sans"}
 .du{width:28px;height:27px;border-radius:4px;background:#0a9df2;margin-left:22px;display:flex;align-items:center;justify-content:center;font:italic bold 20px/1 "Noto Sans"}
 .c{display:flex;flex-direction:column;align-items:center;margin:2px 0 0 29px;font-size:20px;gap:5px;width:106px}.e{width:1px;height:67px;background:#70828f;margin:0 7px 0 32px}`,
 `${[['win',26,26],['excel',34,34],['snip',38,38],['bird',39,38,'u'],['explorer',36,31],['chrome',38,38,'on u'],['skype',38,38,'u'],['sticky',34,34,'u'],['slack',32,32,'u']].map(([n,w,h,c=''])=>`<div class="s ${c}">${ic(n,w,h)}${n==='skype'?'<div class="sk">S</div>':''}</div>`).join('')}
 <div class="sp"></div>${ic('up',19,11)}${ic('batt',27,19,31)}${ic('mute',25,19,27)}${ic('xcirc',26,26,21)}<div class="du">${tx('du',22,0,'margin-top:2px')}</div><div class="c">${tx('11:30',48)}${tx('2018/09/12',106)}</div>${ic('note',28,28,31)}<div class="e"></div>`]);

def('sfa-desktop',()=>[`:host{display:flex;flex-direction:column;width:2048px;height:1365px;overflow:hidden}.page{display:flex;height:1143px;flex:none;overflow:hidden}`,
 `<tab-strip></tab-strip><address-bar></address-bar><bookmark-bar></bookmark-bar><div class="page"><side-bar></side-bar><main-area></main-area><scroll-rail thumb="542"></scroll-rail></div><task-bar></task-bar>`]);
</script>
</body>
</html>
